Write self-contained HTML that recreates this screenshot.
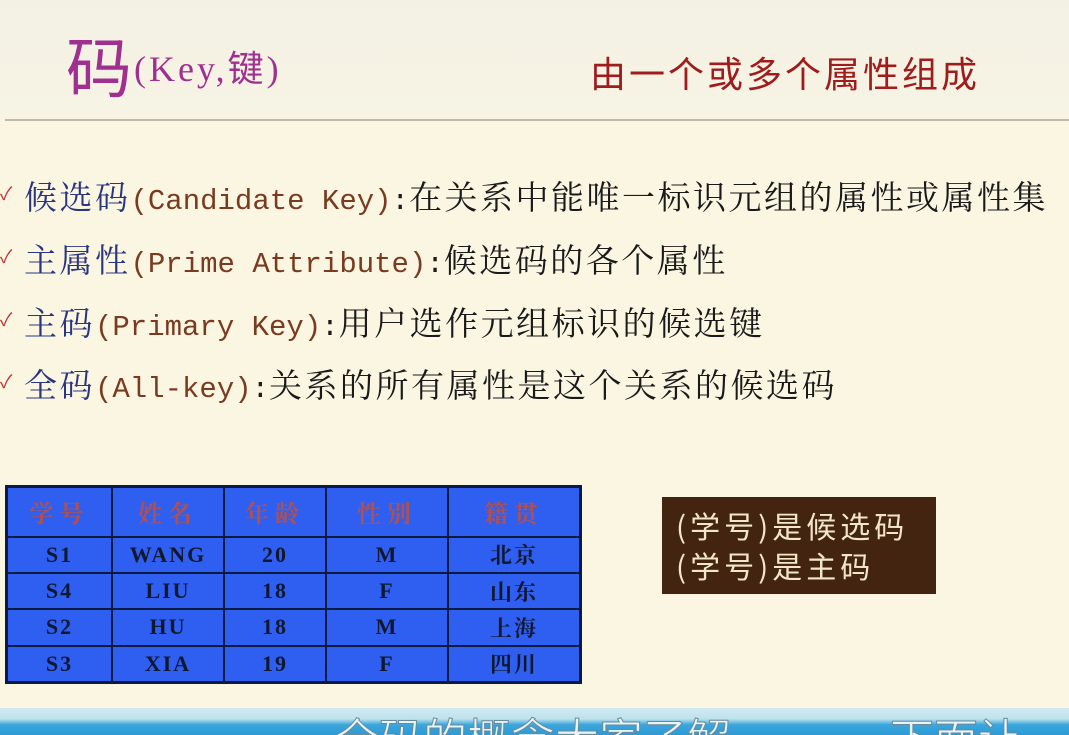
<!DOCTYPE html>
<html style="width:1069px;height:735px;overflow:hidden"><head><meta charset="utf-8"><style>
body{margin:0;width:1069px;height:735px;overflow:hidden;background:#faf6e2;position:relative;font-family:"Liberation Sans","Noto Sans CJK SC",sans-serif}
.a{position:absolute;white-space:nowrap}
.li{font-family:"Liberation Mono","Noto Serif CJK SC",monospace;font-size:29px;color:#1a1a1a;left:24px}
.li .c{font-family:"Noto Serif CJK SC",serif;font-size:33px;letter-spacing:2.5px}
.li .b{color:#2a3580}
.li .e{color:#7a3a20}
.ck{position:absolute;left:0;color:#c03030;font-size:18px}
table{position:absolute;left:5px;top:485px;width:577px;height:199px;border-collapse:collapse;background:#2f5ff0;border:3px solid #0a1a40}
td{border:2px solid #0a1a40;text-align:center;font-family:"Liberation Serif","Noto Serif CJK SC",serif;font-weight:bold;font-size:22px;color:#101830;letter-spacing:2px;padding:0}
tr.h td{color:#b05050;font-size:24px;letter-spacing:6px}
</style></head><body>
<div class="a" style="left:0;top:0;width:1069px;height:120px;background:linear-gradient(#f3f1e4,#f7f4e4)"></div>
<div class="a" style="left:66px;top:16px;font-size:66px;color:#a0308f;font-family:'Noto Sans CJK SC',sans-serif">码</div>
<div class="a" style="left:134px;top:40px;font-size:36px;letter-spacing:3px;color:#a0308f;font-family:'Liberation Serif','Noto Sans CJK SC',serif">(Key,键)</div>
<div class="a" style="left:590px;top:46px;font-size:36px;color:#a01c1c;font-family:'Noto Sans CJK SC',sans-serif;letter-spacing:3px">由一个或多个属性组成</div>
<div class="a" style="left:5px;top:119px;width:1064px;height:2px;background:#bdb9a8"></div>

<div class="ck" style="top:180px">✓</div>
<div class="a li" style="top:172px"><span class="c b">候选码</span><span class="e">(Candidate Key)</span>:<span class="c">在关系中能唯一标识元组的属性或属性集</span></div>
<div class="ck" style="top:243px">✓</div>
<div class="a li" style="top:235px"><span class="c b">主属性</span><span class="e">(Prime Attribute)</span>:<span class="c">候选码的各个属性</span></div>
<div class="ck" style="top:306px">✓</div>
<div class="a li" style="top:298px"><span class="c b">主码</span><span class="e">(Primary Key)</span>:<span class="c">用户选作元组标识的候选键</span></div>
<div class="ck" style="top:368px">✓</div>
<div class="a li" style="top:360px"><span class="c b">全码</span><span class="e">(All-key)</span>:<span class="c">关系的所有属性是这个关系的候选码</span></div>

<table>
<tr class="h" style="height:50px"><td style="width:103px">学号</td><td style="width:110px">姓名</td><td style="width:100px">年龄</td><td style="width:120px">性别</td><td>籍贯</td></tr>
<tr><td>S1</td><td>WANG</td><td>20</td><td>M</td><td>北京</td></tr>
<tr><td>S4</td><td>LIU</td><td>18</td><td>F</td><td>山东</td></tr>
<tr><td>S2</td><td>HU</td><td>18</td><td>M</td><td>上海</td></tr>
<tr><td>S3</td><td>XIA</td><td>19</td><td>F</td><td>四川</td></tr>
</table>

<div class="a" style="left:662px;top:497px;width:274px;height:97px;background:#432410"></div>
<div class="a" style="left:676px;top:505px;font-size:30px;line-height:40px;color:#f3e6c8;letter-spacing:4px;font-family:'Noto Sans CJK SC',sans-serif">(学号)是候选码<br>(学号)是主码</div>

<div class="a" style="left:0;top:708px;width:1069px;height:27px;background:linear-gradient(#cfeaf0,#bfe3ec 40%,#3aa6dc 62%,#2e9ad6)"></div>
<div class="a" style="left:335px;top:706px;height:29px;overflow:hidden;font-size:44px;line-height:60px;color:#e8f4f8;font-family:'Noto Sans CJK SC',sans-serif;-webkit-text-stroke:1px #6a8a98">全码的概念大家了解</div>
<div class="a" style="left:890px;top:706px;height:29px;overflow:hidden;font-size:44px;line-height:60px;color:#e8f4f8;font-family:'Noto Sans CJK SC',sans-serif;-webkit-text-stroke:1px #6a8a98">下面让</div>
</body></html>
